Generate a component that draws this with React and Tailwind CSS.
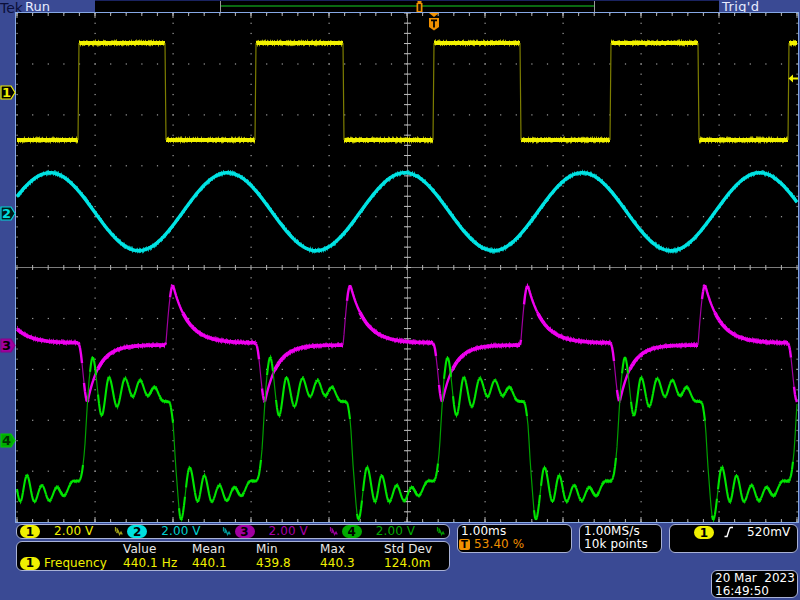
import React from 'react';

const mono = "font-['DejaVu_Sans',sans-serif]";
const PERIOD = 177.4;
const FIRST_RISE = 78.5;

// small seeded random so the noise is the same on every load
let seed = 1234;
const rnd = () => {
    seed = (seed * 16807) % 2147483647;
    return seed / 2147483647;
};

const wrap = (x) => {
    let t = (x - FIRST_RISE) % PERIOD;
    if (t < 0) t += PERIOD;
    return t;
};

const yellowY = (x) => (wrap(x) < 87.3 ? 43 : 140);
const cyanY = (x) => 211.7 - 39 * Math.cos((2 * Math.PI * (x - 50)) / PERIOD);

const magentaY = (x) => {
    const t = wrap(x);
    if (t < 9) return 344 + 58 * (0.5 - 0.5 * Math.cos((Math.PI * t) / 9));
    if (t < 87.3) return 345 + 57 * Math.exp(-(t - 9) / 12);
    if (t < 94.5) return 345 - 60 * Math.sin((Math.PI / 2) * ((t - 87.3) / 7.2));
    return 343 + -58 * Math.exp(-(t - 94.5) / 15);
};

const greenPts = [
    [78, 481], [80, 477], [83.3, 453], [86, 410], [88.5, 376], [91.7, 357], [100.7, 416], [108, 377],
    [116, 407], [124, 378], [131.7, 397], [139, 380], [146.7, 396], [153.3, 387], [161.7, 401],
    [168.3, 402], [171.7, 420], [175, 470], [180, 520], [188.7, 467], [196.7, 502], [203.3, 475],
    [210.7, 502], [218.3, 485], [225.7, 501], [233.3, 487], [240, 496], [249.3, 481], [255.4, 481],
];

const greenTangents = greenPts.map((p, i) => {
    if (i === 0 || i === greenPts.length - 1) return 0;
    const a = (p[1] - greenPts[i - 1][1]) / (p[0] - greenPts[i - 1][0]);
    const b = (greenPts[i + 1][1] - p[1]) / (greenPts[i + 1][0] - p[0]);
    if (a * b <= 0) return 0;
    return (2 * a * b) / (a + b);
});

const greenY = (x) => {
    const px = 78 + wrap(x - 0.5);
    let i = 0;
    while (i < greenPts.length - 2 && px > greenPts[i + 1][0]) i++;
    const [x0, y0] = greenPts[i];
    const [x1, y1] = greenPts[i + 1];
    const h = x1 - x0;
    const s = Math.min(1, Math.max(0, (px - x0) / h));
    const h00 = 2 * s ** 3 - 3 * s ** 2 + 1;
    const h10 = s ** 3 - 2 * s ** 2 + s;
    const h01 = -2 * s ** 3 + 3 * s ** 2;
    const h11 = s ** 3 - s ** 2;
    return h00 * y0 + h10 * h * greenTangents[i] + h01 * y1 + h11 * h * greenTangents[i + 1];
};

// one trace: split by slope, steep parts are thin and dim like on the scope
const buildTrace = (fn, noise) => {
    let flat = '';
    let mid = '';
    let steep = '';
    let fuzz = '';
    for (let x = 17; x < 797; x += 1) {
        const y0 = fn(x);
        const y1 = fn(x + 1);
        const d = Math.abs(y1 - y0);
        const seg = `M${x} ${y0.toFixed(1)}L${x + 1} ${y1.toFixed(1)}`;
        if (d < 2) flat += seg;
        else if (d < 9) mid += seg;
        else steep += seg;
        if (d < 2 && noise > 0) {
            const up = 1 + rnd() * noise;
            const down = 1 + rnd() * noise;
            fuzz += `M${x + 0.5} ${(y0 - up).toFixed(1)}V${(y0 + down).toFixed(1)}`;
        }
    }
    return { flat, mid, steep, fuzz };
};

const traces = [
    { t: buildTrace(yellowY, 2.6), color: '#f2f200', dim: '#7d7d00', width: 4.2, midWidth: 2 },
    { t: buildTrace(cyanY, 2.2), color: '#00e4e4', dim: '#00a0a0', width: 3.4, midWidth: 2.6 },
    { t: buildTrace(magentaY, 2.2), color: '#f000f0', dim: '#a000a0', width: 3.6, midWidth: 2.4 },
    { t: buildTrace(greenY, 1.4), color: '#00e600', dim: '#00a000', width: 2.6, midWidth: 2.1 },
];

const range = (from, to, step) => {
    const out = [];
    for (let v = from; v <= to + 0.01; v += step) out.push(v);
    return out;
};

const vLines = range(17, 797, 78);
const hLines = range(13, 522, 50.9);
const xMinor = range(17, 797, 15.6);
const yMinor = range(13, 522, 10.18);

const Graticule = () => (
    <g>
        {vLines.map((x) =>
            yMinor.map((y) => <rect key={`${x}-${y}`} x={x - 0.5} y={y - 0.5} width="1.2" height="1.2" fill="#a0a0a0" />)
        )}
        {hLines.map((y) =>
            xMinor.map((x) => <rect key={`${x}+${y}`} x={x - 0.5} y={y - 0.5} width="1.2" height="1.2" fill="#a0a0a0" />)
        )}
        <path d="M16 267.5H798M407.5 13V522" stroke="#7c7c7c" strokeWidth="1" />
        {xMinor.map((x) => (
            <path key={x} d={`M${x} 13v3M${x} 522v-3M${x} 265v5`} stroke="#b0b0b0" strokeWidth="1" />
        ))}
        {yMinor.map((y) => (
            <path key={y} d={`M404 ${y}h7`} stroke="#c0c0c0" strokeWidth="1" />
        ))}
        {vLines.map((x) => (
            <path key={x} d={`M${x} 13v5M${x} 522v-5`} stroke="#b0b0b0" strokeWidth="1" />
        ))}
    </g>
);

const Traces = () => (
    <g fill="none">
        {traces.map(({ t, color, dim, width, midWidth }) => (
            <g key={color}>
                <path d={t.fuzz} stroke={color} strokeWidth="1" opacity="0.7" />
                <path d={t.flat} stroke={color} strokeWidth={width} />
                <path d={t.mid} stroke={color} strokeWidth={midWidth} />
                <path d={t.steep} stroke={dim} strokeWidth="1.2" />
            </g>
        ))}
    </g>
);

const ChannelTag = ({ n, top, fill, stroke, text }) => (
    <svg className="absolute left-[-16px]" style={{ top }} width="16" height="15" viewBox="0 0 16 15">
        <path d="M1 1H11L15 7.5L11 14H1Z" fill={fill} stroke={stroke} strokeWidth="1.2" />
        <text x="6.5" y="12" textAnchor="middle" fontSize="13" fontWeight="bold" fontFamily="DejaVu Sans, sans-serif" fill={text}>
            {n}
        </text>
    </svg>
);

const Pill = ({ n, className }) => (
    <span className={`flex h-[13px] w-[20px] shrink-0 items-center justify-center rounded-full text-[12px] font-bold leading-none text-black ${className}`}>
        {n}
    </span>
);

const BwIcon = ({ className }) => (
    <svg className={`ml-auto mr-[1px] ${className}`} width="9" height="11" viewBox="0 0 9 11" fill="none" stroke="currentColor" strokeWidth="1.2">
        <path d="M1.5 1V5H3.5V3H1.5" />
        <path d="M2.5 7L4.2 5L5.6 8.5L7 6.2L8.2 8.5" strokeWidth="1.4" />
    </svg>
);

const channels = [
    { n: 1, pill: 'bg-[#f0f000]', text: 'text-[#f0f000]', icon: 'text-[#a0a018]' },
    { n: 2, pill: 'bg-[#00e0e0]', text: 'text-[#00cfcf]', icon: 'text-[#009a9a]' },
    { n: 3, pill: 'bg-[#a000a0]', text: 'text-[#a800a8]', icon: 'text-[#9a009a]' },
    { n: 4, pill: 'bg-[#00aa00]', text: 'text-[#00aa00]', icon: 'text-[#009a00]' },
];

const panel = 'rounded-[6px] border border-[#a9b2d6] bg-black';

const stats = [
    { label: 'Value', value: '440.1 Hz' },
    { label: 'Mean', value: '440.1' },
    { label: 'Min', value: '439.8' },
    { label: 'Max', value: '440.3' },
    { label: 'Std Dev', value: '124.0m' },
];

export default function App() {
    return (
        <div className={`flex h-[600px] w-[800px] flex-col overflow-hidden bg-[#3a4a94] text-[12px] leading-[13px] tracking-[0.1px] text-white ${mono}`}>
            {/* status bar */}
            <div className="relative flex h-[12px] shrink-0">
                <div className="flex w-[95px] items-start">
                    <span className="text-[14px] leading-[16px] tracking-normal text-[#0b0f3a]">Tek</span>
                    <span className="ml-[2px] text-[13px] leading-[14px] text-[#e8ecff]">Run</span>
                </div>
                <div className="relative flex w-[624px] items-center border-t border-[#1a2360] bg-black">
                    <div className="ml-[125px] h-[11px] w-[375px] border-x border-[#9a9a9a]">
                        <div className="mt-[4px] h-[2px] bg-[#0a6a12]" />
                    </div>
                </div>
                <div className="flex-1 pl-[3px] text-[13px] leading-[14px] tracking-[0.4px] text-[#e8ecff]">Trig'd</div>
                <svg className="absolute left-[415px] top-[1px]" width="9" height="12" viewBox="0 0 9 12">
                    <path d="M2.5 0H6.5V2H7.5V11L6 12H3L1.5 11V2H2.5Z" fill="#f09000" />
                    <path d="M3.2 3V10H5.8V3" fill="#201000" />
                </svg>
            </div>

            {/* graticule */}
            <div className="relative ml-[15px] h-[511px] w-[784px] shrink-0 border border-[#86a8e6] bg-black">
                <svg className="block" width="782" height="509" viewBox="16 13 782 509">
                    <Graticule />
                    <Traces />
                    <path d="M788.5 78.5L793 74.5V77.5H798V79.5H793V82.5Z" fill="#f2f200" />
                </svg>
                <ChannelTag n="1" top={72} fill="#000" stroke="#f0f000" text="#f0f000" />
                <ChannelTag n="2" top={193} fill="#001a1a" stroke="#00d8d8" text="#00e0e0" />
                <ChannelTag n="3" top={325} fill="#a000a0" stroke="#8a008a" text="#000" />
                <ChannelTag n="4" top={420} fill="#00aa00" stroke="#00cc00" text="#003000" />
                <svg className="absolute left-[412px] top-[0px]" width="12" height="18" viewBox="0 0 12 18">
                    <path d="M1 0H11L6 4Z" fill="#f09000" />
                    <path d="M1 5H11V14L6 17.5L1 14Z" fill="#f09000" />
                    <path d="M3 6.5H9V8.2H6.9V14.5H5.1V8.2H3Z" fill="#000" />
                </svg>
            </div>

            {/* readouts */}
            <div className="ml-[16px] mr-[2px] mt-[1px] flex flex-1 gap-[7px]">
                <div className="flex w-[434px] shrink-0 flex-col gap-[2px]">
                    <div className={`${panel} grid h-[15px] grid-cols-4 items-center pl-[3px]`}>
                        {channels.map((c) => (
                            <div key={c.n} className="flex items-center pr-[3px]">
                                <Pill n={c.n} className={c.pill} />
                                <span className={`ml-[14px] ${c.text}`}>2.00 V</span>
                                <BwIcon className={c.icon} />
                            </div>
                        ))}
                    </div>
                    <div className={`${panel} grid h-[30px] grid-cols-[103px_69px_64px_64px_64px_1fr] items-center pl-[3px]`}>
                        <span />
                        {stats.map((s) => (
                            <span key={s.label} className="text-[#e8e8e8]">{s.label}</span>
                        ))}
                        <div className="flex items-center">
                            <Pill n={1} className="bg-[#f0f000]" />
                            <span className="ml-[4px] text-[#f0f000]">Frequency</span>
                        </div>
                        {stats.map((s) => (
                            <span key={s.label} className="text-[#f0f000]">{s.value}</span>
                        ))}
                    </div>
                </div>

                <div className="flex flex-1 flex-col justify-between pb-[2px]">
                    <div className="flex gap-[7px]">
                        <div className={`${panel} h-[29px] w-[115px] pl-[3px]`}>
                            <div>1.00ms</div>
                            <div className="ml-[-2px] flex items-center text-[#f09000]">
                                <span className="flex h-[11px] w-[11px] items-center justify-center rounded-[2px] bg-[#f09000] text-[10px] font-bold leading-none text-black">T</span>
                                <span className="ml-[4px]">53.40 %</span>
                            </div>
                        </div>
                        <div className={`${panel} h-[29px] w-[83px] pl-[4px]`}>
                            <div>1.00MS/s</div>
                            <div>10k points</div>
                        </div>
                        <div className={`${panel} flex h-[29px] flex-1 items-start pl-[24px] pt-[1px]`}>
                            <Pill n={1} className="bg-[#f0f000]" />
                            <svg className="ml-[10px]" width="10" height="12" viewBox="0 0 10 12" fill="none" stroke="#fff" strokeWidth="1.4">
                                <path d="M0.5 10.5H3L5.5 2.5Q6 1.5 7 1.5H9" />
                            </svg>
                            <span className="ml-[13px]">520mV</span>
                        </div>
                    </div>
                    <div className={`${panel} ml-auto h-[28px] w-[87px] pl-[3px] pt-[1px] tracking-normal`}>
                        <div className="whitespace-pre">20 Mar  2023</div>
                        <div>16:49:50</div>
                    </div>
                </div>
            </div>
        </div>
    );
}
